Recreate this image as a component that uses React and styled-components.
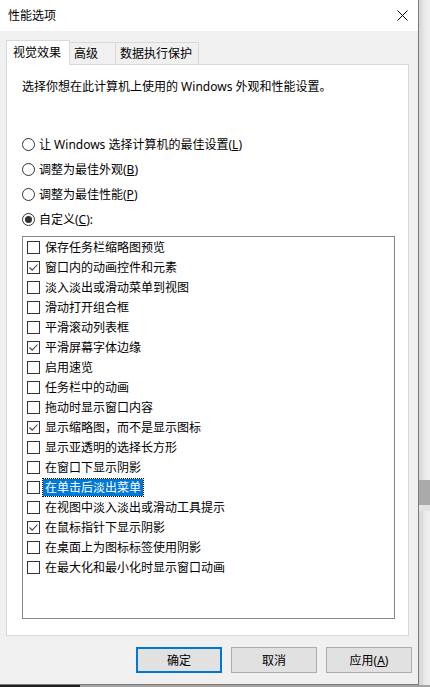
import React from 'react';
import styled, { createGlobalStyle } from 'styled-components';

const GlobalStyle = createGlobalStyle`
  html, body {
    margin: 0;
    padding: 0;
  }
  body {
    font-family: "Noto Sans", "Noto Sans CJK SC", sans-serif;
    font-size: 12px;
    color: #000;
  }
`;

const Screen = styled.div`
  width: 430px;
  height: 687px;
  overflow: hidden;
  display: flex;
  flex-direction: column;
  background: #ececec;
`;

const Top = styled.div`
  display: flex;
  height: 685px;
`;

const Side = styled.div`
  flex: 1;
  display: flex;
  flex-direction: column;
  background: linear-gradient(to right, #d4d4d4, #e9e9e9 50%, #f0f0f0);
`;

const SideBlock = styled.div`
  height: ${p => p.$h}px;
  flex: ${p => (p.$h ? 'none' : 1)};
  background: ${p => p.$bg || 'transparent'};
  border-left: ${p => (p.$line ? '1px solid #d6d6d6' : 'none')};
  margin-left: ${p => (p.$line ? '3px' : '0')};
`;

const Taskbar = styled.div`
  display: flex;
  height: 2px;
  background: #a3a3a3;

  & > div {
    width: 80px;
    background: #1e1e1e;
  }
`;

const Dialog = styled.div`
  width: 419px;
  box-sizing: border-box;
  border-right: 1px solid #7a7a7a;
  border-bottom: 1px solid #7a7a7a;
  display: flex;
  flex-direction: column;
  background: #f0f0f0;
`;

const TitleBar = styled.div`
  height: 31px;
  flex: none;
  background: #fff;
  display: flex;
  align-items: center;
  justify-content: space-between;
  padding: 0 10px 0 8px;
  line-height: 16px;
`;

const Body = styled.div`
  flex: 1;
  display: flex;
  flex-direction: column;
  padding: 9px 6px 11px 6px;
`;

const TabArea = styled.div`
  margin-right: 3px;
  display: flex;
  flex-direction: column;
`;

const Tabs = styled.div`
  display: flex;
  align-items: flex-end;
  height: 25px;
  margin-bottom: -1px;
  position: relative;
  z-index: 1;
`;

const Tab = styled.div`
  box-sizing: border-box;
  width: ${p => p.$w}px;
  height: ${p => (p.$active ? 25 : 23)}px;
  display: flex;
  align-items: center;
  padding-left: ${p => (p.$active ? 6 : 4)}px;
  padding-bottom: ${p => (p.$active ? 1 : 0)}px;
  background: ${p => (p.$active ? '#fff' : '#f0f0f0')};
  border: 1px solid #d9d9d9;
  border-left: ${p => (p.$active ? '1px solid #d9d9d9' : 'none')};
  border-bottom: ${p => (p.$active ? 'none' : '1px solid #d9d9d9')};
  line-height: 16px;
  white-space: nowrap;
`;

const Panel = styled.div`
  height: 572px;
  box-sizing: border-box;
  background: #fff;
  border: 1px solid #d9d9d9;
  display: flex;
  flex-direction: column;
  padding: 14px 13px 16px 15px;
`;

const Description = styled.div`
  line-height: 16px;
  height: 16px;
  white-space: nowrap;
`;

const RadioGroup = styled.div`
  margin-top: 37px;
  display: flex;
  flex-direction: column;
`;

const RadioRow = styled.div`
  height: 25px;
  display: flex;
  align-items: center;
  line-height: 16px;
  white-space: nowrap;
`;

const RadioCircle = styled.span`
  width: 13px;
  height: 13px;
  box-sizing: border-box;
  border: 1px solid #333;
  border-radius: 50%;
  margin-right: 4px;
  display: grid;
  place-items: center;
  flex: none;

  &::after {
    content: '';
    width: 7px;
    height: 7px;
    border-radius: 50%;
    background: ${p => (p.$checked ? '#333' : 'transparent')};
  }
`;

const U = styled.span`
  text-decoration: underline;
  text-underline-offset: 1px;
`;

const ListBox = styled.div`
  margin-top: 4px;
  flex: 1;
  border: 1px solid #828790;
  padding-left: 4px;
  display: flex;
  flex-direction: column;
`;

const Item = styled.div`
  height: 20px;
  display: flex;
  align-items: center;
  white-space: nowrap;
`;

const Box = styled.span`
  width: 13px;
  height: 13px;
  box-sizing: border-box;
  border: 1px solid #333;
  background: #fff;
  margin-right: 3px;
  flex: none;
  display: grid;
  place-items: center;
`;

const ItemLabel = styled.span`
  height: 17px;
  line-height: 17px;
  padding: 0 2px;
  box-sizing: border-box;
  background: ${p => (p.$selected ? '#0078d7' : 'transparent')};
  color: ${p => (p.$selected ? '#fff' : '#000')};
  outline: ${p => (p.$selected ? '1px dotted #000' : 'none')};
`;

const ButtonRow = styled.div`
  margin-top: 11px;
  display: flex;
  justify-content: flex-end;
  gap: 9px;
`;

const Button = styled.button`
  width: 86px;
  height: 26px;
  box-sizing: border-box;
  background: #e1e1e1;
  border: ${p => (p.$default ? '2px solid #0078d7' : '1px solid #adadad')};
  font-family: inherit;
  font-size: 12px;
  color: #000;
  padding: 0;
  cursor: pointer;
`;

const items = [
  ['保存任务栏缩略图预览', false],
  ['窗口内的动画控件和元素', true],
  ['淡入淡出或滑动菜单到视图', false],
  ['滑动打开组合框', false],
  ['平滑滚动列表框', false],
  ['平滑屏幕字体边缘', true],
  ['启用速览', false],
  ['任务栏中的动画', false],
  ['拖动时显示窗口内容', false],
  ['显示缩略图，而不是显示图标', true],
  ['显示亚透明的选择长方形', false],
  ['在窗口下显示阴影', false],
  ['在单击后淡出菜单', false, true],
  ['在视图中淡入淡出或滑动工具提示', false],
  ['在鼠标指针下显示阴影', true],
  ['在桌面上为图标标签使用阴影', false],
  ['在最大化和最小化时显示窗口动画', false],
];

const Check = () => (
  <svg width="11" height="11" viewBox="0 0 11 11">
    <polyline points="1.5,5.5 4.2,8.2 9.5,2.5" fill="none" stroke="#444" strokeWidth="1.1" />
  </svg>
);

const CloseIcon = () => (
  <svg width="11" height="11" viewBox="0 0 11 11">
    <path d="M0.5 0.5 L10.5 10.5 M10.5 0.5 L0.5 10.5" stroke="#000" strokeWidth="1" />
  </svg>
);

const App = () => (
  <>
    <GlobalStyle />
    <Screen>
      <Top>
        <Dialog>
          <TitleBar>
            <span>性能选项</span>
            <CloseIcon />
          </TitleBar>
          <Body>
            <TabArea>
              <Tabs>
                <Tab $active $w={64}>视觉效果</Tab>
                <Tab $w={46}>高级</Tab>
                <Tab $w={83}>数据执行保护</Tab>
              </Tabs>
              <Panel>
                <Description>选择你想在此计算机上使用的 Windows 外观和性能设置。</Description>
                <RadioGroup>
                  <RadioRow>
                    <RadioCircle />让 Windows 选择计算机的最佳设置(<U>L</U>)
                  </RadioRow>
                  <RadioRow>
                    <RadioCircle />调整为最佳外观(<U>B</U>)
                  </RadioRow>
                  <RadioRow>
                    <RadioCircle />调整为最佳性能(<U>P</U>)
                  </RadioRow>
                  <RadioRow>
                    <RadioCircle $checked />自定义(<U>C</U>):
                  </RadioRow>
                </RadioGroup>
                <ListBox>
                  {items.map(([label, checked, selected]) => (
                    <Item key={label}>
                      <Box>{checked && <Check />}</Box>
                      <ItemLabel $selected={selected}>{label}</ItemLabel>
                    </Item>
                  ))}
                </ListBox>
              </Panel>
            </TabArea>
            <ButtonRow>
              <Button $default>确定</Button>
              <Button>取消</Button>
              <Button>应用(<U>A</U>)</Button>
            </ButtonRow>
          </Body>
        </Dialog>
        <Side>
          <SideBlock $h={480} />
          <SideBlock $h={25} $bg="#aaaaaa" />
          <SideBlock $h={6} $bg="#e4e4e4" />
          <SideBlock $line />
        </Side>
      </Top>
      <Taskbar>
        <div />
      </Taskbar>
    </Screen>
  </>
);

export default App;
